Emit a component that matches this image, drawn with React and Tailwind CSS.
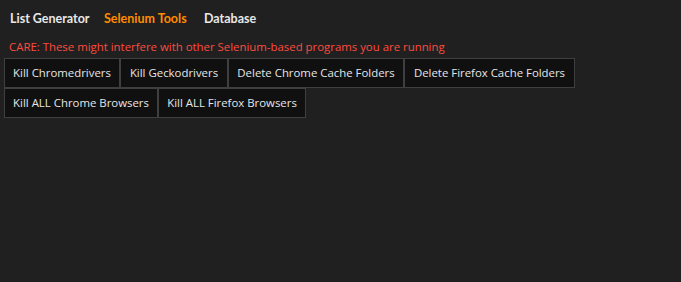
import React from "react";

const tabs = [
    { label: "List Generator", active: false, w: "w-[79px]" },
    { label: "Selenium Tools", active: true, w: "w-[85px]" },
    { label: "Database", active: false, w: "w-[57px]" },
];

const rows = [
    [
        { label: "Kill Chromedrivers", w: "w-[116px]" },
        { label: "Kill Geckodrivers", w: "w-[108px]" },
        { label: "Delete Chrome Cache Folders", w: "w-[176px]" },
        { label: "Delete Firefox Cache Folders", w: "w-[171px]" },
    ],
    [
        { label: "Kill ALL Chrome Browsers", w: "w-[154px]" },
        { label: "Kill ALL Firefox Browsers", w: "w-[148px]" },
    ],
];

export default function App() {
    return (
        <div className="w-[681px] h-[282px] bg-[#202020] overflow-hidden">
            <div className="flex gap-[15px] pl-[10px] pt-[11px] font-['Lato',sans-serif] font-bold text-[12.5px] leading-[16px]">
                {tabs.map((tab) => (
                    <span
                        key={tab.label}
                        className={`${tab.w} whitespace-nowrap ${
                            tab.active ? "text-[#ff8c00]" : "text-[#e8e8e8]"
                        }`}
                    >
                        {tab.label}
                    </span>
                ))}
            </div>
            <div className="pl-[9px] pt-[12px] font-['Open_Sans',sans-serif] text-[11.4px] leading-[16px] text-[#ff4b3e] whitespace-nowrap">
                CARE: These might interfere with other Selenium-based programs you are running
            </div>
            <div className="pl-[4px] pt-[3px] flex flex-col">
                {rows.map((row, i) => (
                    <div key={i} className="flex">
                        {row.map((b) => (
                            <button
                                key={b.label}
                                className={`${b.w} h-[30px] bg-[#101010] border border-[#3f3f3f] text-[#e6e6e6] font-['Open_Sans',sans-serif] text-[11.4px] leading-none whitespace-nowrap`}
                            >
                                {b.label}
                            </button>
                        ))}
                    </div>
                ))}
            </div>
        </div>
    );
}
